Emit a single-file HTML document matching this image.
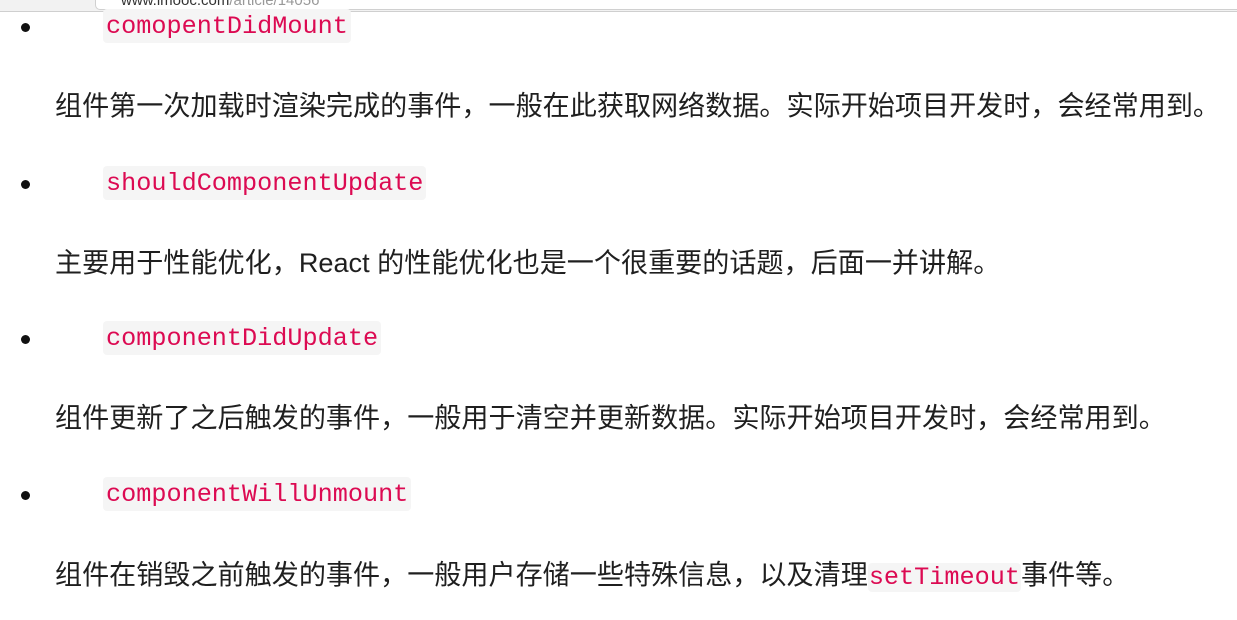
<!DOCTYPE html>
<html><head><meta charset="utf-8"><style>
body{margin:0;width:1237px;height:620px;background:#fff;overflow:hidden;position:relative;font-family:"Liberation Sans","Noto Sans CJK SC",sans-serif;color:#1f1f1f}
.bar{position:absolute;left:0;top:0;width:1237px;height:11px;background:#f2f2f2;border-bottom:1px solid #cfcfcf}
.url{position:absolute;left:95px;top:-8px;width:1150px;height:18px;background:#fff;border:1px solid #d0d0d0;border-radius:5px;font-size:15px;line-height:16px;color:#999;padding-left:25px;box-sizing:border-box;overflow:hidden}
.dot{position:absolute;left:21px;width:9px;height:9px;border-radius:50%;background:#111}
.code{position:absolute;left:103px;font-family:"Liberation Mono","DejaVu Sans Mono",monospace;font-size:25.2px;color:#dc0a52;background:#f5f5f5;border-radius:4px;padding:0 3px;height:34px;line-height:36px}
.p{position:absolute;left:55px;font-size:27.1px;line-height:34px;white-space:nowrap}
.ic{font-family:"Liberation Mono","DejaVu Sans Mono",monospace;font-size:25.2px;color:#dc0a52;background:#f5f5f5;border-radius:4px;padding:0 1px}
</style></head><body>
<div class="bar"><div class="url"><span style="color:#333">www.imooc.com</span>/article/14056</div></div>
<div class="dot" style="top:23px"></div>
<div class="code" style="top:9px">comopentDidMount</div>
<div class="p" style="top:89px">组件第一次加载时渲染完成的事件，一般在此获取网络数据。实际开始项目开发时，会经常用到。</div>
<div class="dot" style="top:180px"></div>
<div class="code" style="top:166px">shouldComponentUpdate</div>
<div class="p" style="top:246px">主要用于性能优化，React 的性能优化也是一个很重要的话题，后面一并讲解。</div>
<div class="dot" style="top:335px"></div>
<div class="code" style="top:321px">componentDidUpdate</div>
<div class="p" style="top:401px">组件更新了之后触发的事件，一般用于清空并更新数据。实际开始项目开发时，会经常用到。</div>
<div class="dot" style="top:491px"></div>
<div class="code" style="top:477px">componentWillUnmount</div>
<div class="p" style="top:558px">组件在销毁之前触发的事件，一般用户存储一些特殊信息，以及清理<span class="ic">setTimeout</span>事件等。</div>
</body></html>
